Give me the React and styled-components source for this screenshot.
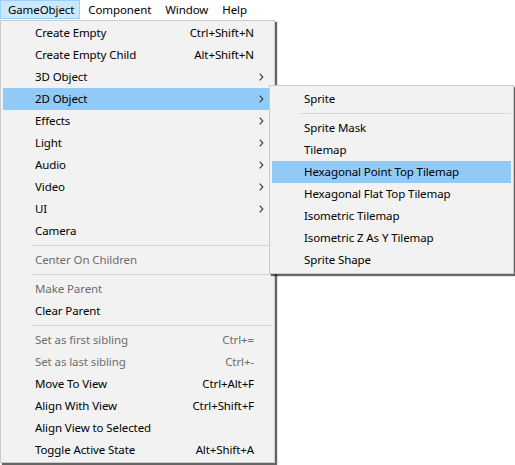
import React from "react";
import styled, { createGlobalStyle } from "styled-components";

const GlobalStyle = createGlobalStyle`
  html, body {
    margin: 0;
    padding: 0;
    background: #ffffff;
  }
  body {
    font-family: "Noto Sans", "Liberation Sans", sans-serif;
    font-size: 11.5px;
    letter-spacing: -0.1px;
    color: #000;
  }
`;

const mainItems = [
  { label: "Create Empty", shortcut: "Ctrl+Shift+N" },
  { label: "Create Empty Child", shortcut: "Alt+Shift+N" },
  { label: "3D Object", sub: true },
  { label: "2D Object", sub: true, active: true, open: true },
  { label: "Effects", sub: true },
  { label: "Light", sub: true },
  { label: "Audio", sub: true },
  { label: "Video", sub: true },
  { label: "UI", sub: true },
  { label: "Camera" },
  { sep: true },
  { label: "Center On Children", disabled: true },
  { sep: true },
  { label: "Make Parent", disabled: true },
  { label: "Clear Parent" },
  { sep: true },
  { label: "Set as first sibling", shortcut: "Ctrl+=", disabled: true },
  { label: "Set as last sibling", shortcut: "Ctrl+-", disabled: true },
  { label: "Move To View", shortcut: "Ctrl+Alt+F" },
  { label: "Align With View", shortcut: "Ctrl+Shift+F" },
  { label: "Align View to Selected" },
  { label: "Toggle Active State", shortcut: "Alt+Shift+A" },
];

const subItems = [
  { label: "Sprite" },
  { sep: true },
  { label: "Sprite Mask" },
  { label: "Tilemap" },
  { label: "Hexagonal Point Top Tilemap", active: true },
  { label: "Hexagonal Flat Top Tilemap" },
  { label: "Isometric Tilemap" },
  { label: "Isometric Z As Y Tilemap" },
  { label: "Sprite Shape" },
];

const Chevron = () => (
  <svg width="5" height="8" viewBox="0 0 5 8">
    <path d="M0.7 0.7 L3.8 4 L0.7 7.3" fill="none" stroke="#3a3a3a" strokeWidth="1.1" />
  </svg>
);

const MenuList = ({ items, children }) =>
  items.map((it, i) =>
    it.sep ? (
      <Separator key={i} />
    ) : (
      <Item key={i} $active={it.active} $disabled={it.disabled}>
        <Label>{it.label}</Label>
        <Shortcut>{it.shortcut}</Shortcut>
        <Arrow>{it.sub && <Chevron />}</Arrow>
        {it.open && children}
      </Item>
    )
  );

const App = () => {
  return (
    <Screen>
      <GlobalStyle />
      <MenuBar>
        <BarItem $active>GameObject</BarItem>
        <BarItem>Component</BarItem>
        <BarItem>Window</BarItem>
        <BarItem>Help</BarItem>
      </MenuBar>
      <Dropdown>
        <MenuList items={mainItems}>
          <SubMenu>
            <MenuList items={subItems} />
          </SubMenu>
        </MenuList>
      </Dropdown>
    </Screen>
  );
};

export default App;

const Screen = styled.div`
  position: relative;
  width: 515px;
  height: 465px;
  background: #fff;
`;

const MenuBar = styled.div`
  display: flex;
  height: 20px;
  background: #fff;
`;

const BarItem = styled.div`
  height: 19px;
  line-height: 17px;
  padding: 0 5px 0 7px;
  border: 1px solid ${(p) => (p.$active ? "#99d1ff" : "transparent")};
  background: ${(p) => (p.$active ? "#cce8ff" : "transparent")};
  box-sizing: border-box;
`;

const Dropdown = styled.div`
  position: absolute;
  top: 20px;
  left: 0;
  width: 275px;
  box-sizing: border-box;
  padding: 1px 2px;
  background: #f2f2f2;
  border: 1px solid #cccccc;
  box-shadow: 2px 2px 1px rgba(0, 0, 0, 0.6);
`;

const SubMenu = styled.div`
  position: absolute;
  top: -3px;
  left: 266px;
  width: 245px;
  box-sizing: border-box;
  padding: 2px 2px;
  background: #f2f2f2;
  border: 1px solid #cccccc;
  box-shadow: 2px 2px 1px rgba(0, 0, 0, 0.6);
  z-index: 2;
`;

const Item = styled.div`
  position: relative;
  display: grid;
  grid-template-columns: 1fr auto 18px;
  align-items: center;
  height: 22px;
  padding-left: 32px;
  background: ${(p) => (p.$active ? "#91c9f7" : "transparent")};
  color: ${(p) => (p.$disabled ? "#6d6d6d" : "#000")};
  white-space: nowrap;
`;

const Label = styled.span`
  line-height: 22px;
`;

const Shortcut = styled.span`
  line-height: 22px;
  text-align: right;
`;

const Arrow = styled.span`
  display: flex;
  align-items: center;
  padding-left: 5px;
  height: 22px;
`;

const Separator = styled.div`
  height: 7px;
  display: flex;
  align-items: center;
  padding-left: 28px;

  &::after {
    content: "";
    flex: 1;
    height: 1px;
    background: #d7d7d7;
  }
`;
